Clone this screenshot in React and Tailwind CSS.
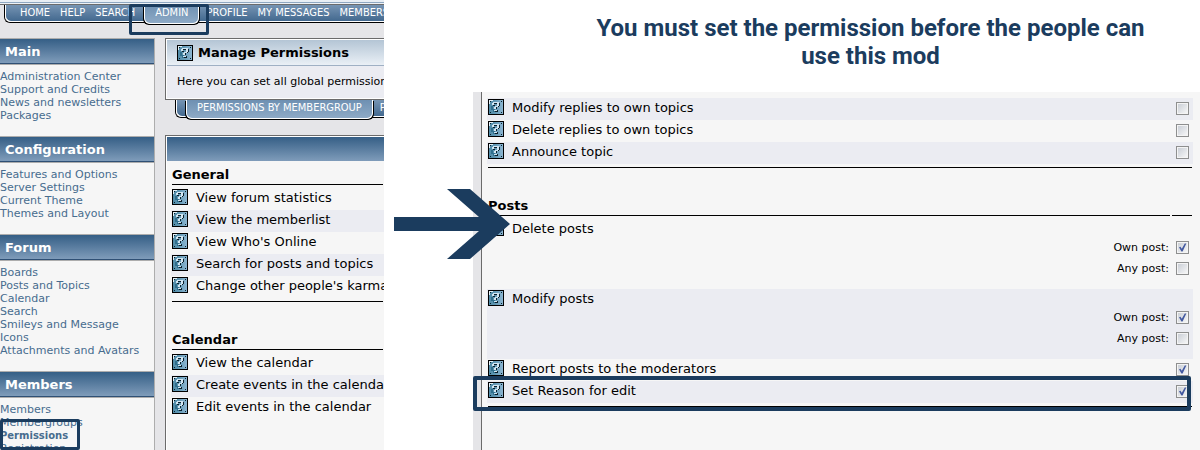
import React, { useState } from 'react';

const sidebarSections = [
  {
    title: 'Main',
    links: ['Administration Center', 'Support and Credits', 'News and newsletters', 'Packages']
  },
  {
    title: 'Configuration',
    links: ['Features and Options', 'Server Settings', 'Current Theme', 'Themes and Layout']
  },
  {
    title: 'Forum',
    links: ['Boards', 'Posts and Topics', 'Calendar', 'Search', 'Smileys and Message Icons', 'Attachments and Avatars']
  },
  {
    title: 'Members',
    links: ['Members', 'Membergroups', 'Permissions', 'Registration']
  }
];

const generalPermissions = [
  'View forum statistics',
  'View the memberlist',
  "View Who's Online",
  'Search for posts and topics',
  "Change other people's karma"
];

const calendarPermissions = [
  'View the calendar',
  'Create events in the calendar',
  'Edit events in the calendar'
];

const HelpIcon = () => (
  <svg className="w-4 h-4 shrink-0" viewBox="0 0 16 16" shapeRendering="crispEdges" aria-hidden="true">
    <defs>
      <linearGradient id="helpFill" x1="0" y1="0" x2="1" y2="0">
        <stop offset="0" stopColor="#4f8aa6" />
        <stop offset="0.4" stopColor="#5f97b3" />
        <stop offset="1" stopColor="#8db6d2" />
      </linearGradient>
    </defs>
    <rect width="16" height="16" fill="#000" />
    <rect x="1" y="1" width="14" height="14" fill="url(#helpFill)" />
    <path d="M1 1h4v1H3v1H2v2H1z" fill="#e4f1f8" />
    <path d="M2 2h1v1H2zM13 2h1v1h-1zM2 13h1v1H2zM13 13h1v1h-1z" fill="#06222f" />
    <path d="M3 7h2v3h2v3H5v-2H3z" fill="#2f6e8c" />
    <path d="M11 4h1v3h-1v1H9v2H8V8h2V7h1zM5 6h2v1H5zM6 4h3v1H6zM9 11h1v2H7v-1h2z" fill="#0a1f2b" />
    <path d="M5 3h6v1H5zM4 4h2v2H4zM9 4h2v3H9zM7 7h3v1H7zM6 8h2v2H6zM6 11h3v1H6z" fill="#d3e6f2" />
  </svg>
);

/* Nav tab strip with the classic rounded black/white outline */
const TabStrip = ({ items, active, className }) => (
  <nav className={`w-max border-l border-b border-black rounded-bl-md font-['DejaVu_Sans_Condensed','DejaVu_Sans',sans-serif] text-[11px] text-white ${className}`}>
    <div className="flex h-[17px] border-l border-b border-white rounded-bl-md bg-linear-to-b from-[#7694b3] to-[#43698f]">
      {items.map((item) => (
        <a
          key={item}
          href="#"
          className={
            item === active
              ? 'relative h-[19px] ml-1 mr-0.5 px-[10px] leading-4 border-x border-b border-white rounded-b-md bg-linear-to-b from-[#6e90b2] to-[#8eaac6] shadow-[1px_1px_0_#000,-1px_1px_0_#000]'
              : 'px-[5px] leading-4'
          }
        >
          {item}
        </a>
      ))}
    </div>
  </nav>
);

const Highlight = ({ className }) => (
  <span className={`absolute z-10 rounded-xs border-[#1b3c5e] pointer-events-none ${className}`} />
);

const Sidebar = () => (
  <aside className="w-[155px] shrink-0 border-r border-[#adadad] bg-[#f6f6f6] whitespace-normal">
    {sidebarSections.map(({ title, links }) => (
      <section key={title}>
        <h3 className="h-[27px] border-t border-b border-[#adadad]">
          <span className="block h-full pl-[5px] border-b border-[#2f5075] bg-linear-to-b from-[#355f86] to-[#7f9cba] text-[13px] leading-[26px] font-bold text-white">
            {title}
          </span>
        </h3>
        <ul className="pt-[5px] pb-[14px] pr-2 text-[11px] leading-[13px] text-[#476c8e]">
          {links.map((link) => (
            <li key={link} className="relative">
              <a href="#" className={link === 'Permissions' ? 'text-[10px] font-bold' : ''}>{link}</a>
              {link === 'Permissions' && (
                <Highlight className="left-0 -top-[10px] w-20 h-[31px] border-[3px]" />
              )}
            </li>
          ))}
        </ul>
      </section>
    ))}
  </aside>
);

const SectionTitle = ({ children, split }) => (
  <div className="flex gap-0.5 mx-px mb-[3px]">
    <h4 className="flex-1 h-5 border-b border-black text-[13px] leading-[19px] font-bold">{children}</h4>
    {split && <span className="w-5 border-b border-black" />}
  </div>
);

const SectionEnd = () => <div className="mx-px mt-[3px] mb-7 border-b border-black" />;

const PermissionList = ({ title, items }) => (
  <section>
    <SectionTitle>{title}</SectionTitle>
    <ul>
      {items.map((item) => (
        <li key={item} className="flex gap-2 h-[22px] px-px pt-px text-[13px] leading-[18px] even:bg-[#ebecf2]">
          <HelpIcon />
          <span>{item}</span>
        </li>
      ))}
    </ul>
  </section>
);

const Checkbox = ({ id, defaultChecked = false }) => {
  const [checked, setChecked] = useState(defaultChecked);

  return (
    <span className="relative block w-[13px] h-[13px] shrink-0">
      <input
        id={id}
        type="checkbox"
        checked={checked}
        onChange={(e) => setChecked(e.target.checked)}
        className="block w-[13px] h-[13px] appearance-none border border-[#8e8f8f] bg-linear-to-br from-[#c6cbd3] to-[#fafafa] shadow-[inset_0_0_0_1px_#f4f4f4]"
      />
      {checked && (
        <svg className="absolute inset-0 pointer-events-none" viewBox="0 0 13 13" aria-hidden="true">
          <path d="M3 6.2l1.5-.5 1.3 2L8.8 2.4l1.5.1L6.6 10.4H5.4z" fill="#4258a0" />
        </svg>
      )}
    </span>
  );
};

const CheckRow = ({ id, label, shaded, checked, highlighted }) => (
  <div className={`relative flex gap-2 h-[22px] pl-px pr-1 pt-px text-[13px] leading-[18px] ${shaded ? 'bg-[#ebecf2]' : ''}`}>
    <HelpIcon />
    <label htmlFor={id} className="flex-1">{label}</label>
    <div className="pt-[3px]">
      <Checkbox id={id} defaultChecked={checked} />
    </div>
    {highlighted && <Highlight className="-left-[14px] right-0.5 -top-[5px] h-[35px] border-4" />}
  </div>
);

const OwnAnyRow = ({ id, label, shaded }) => (
  <div className={`h-[70px] pl-px pr-1 pt-px ${shaded ? 'bg-[#ebecf2]' : ''}`}>
    <div className="flex gap-2 text-[13px] leading-[18px]">
      <HelpIcon />
      <span>{label}</span>
    </div>
    <div className="flex flex-col gap-2 pt-[3px] text-[11px] leading-[13px]">
      <div className="flex justify-end gap-[7px]">
        <label htmlFor={`${id}-own`}>Own post:</label>
        <Checkbox id={`${id}-own`} defaultChecked />
      </div>
      <div className="flex justify-end gap-[7px]">
        <label htmlFor={`${id}-any`}>Any post:</label>
        <Checkbox id={`${id}-any`} />
      </div>
    </div>
  </div>
);

const AdminPanel = () => (
  <div className="flex flex-col w-[32%] shrink-0 overflow-hidden whitespace-nowrap bg-[#e5e5e8]">
    <header className="relative h-[38px] shrink-0">
      <div className="h-1 border-t-2 border-b border-t-[#e8eef4] border-b-[#edf2f7] bg-[#8fa8c2]" />
      <div className="border-t border-[#6b6b6b]">
        <TabStrip
          items={['HOME', 'HELP', 'SEARCH', 'ADMIN', 'PROFILE', 'MY MESSAGES', 'MEMBERS']}
          active="ADMIN"
          className="ml-1 [&>div]:pl-[9px]"
        />
      </div>
      <Highlight className="left-[129px] top-1 w-20 h-[31px] border-[3px]" />
    </header>

    <div className="flex flex-1 gap-[10px] min-h-0">
      <Sidebar />
      <main className="flex flex-1 flex-col min-w-0">
        <section className="shrink-0 border border-r-0 border-[#6b6b6b] bg-white p-px pr-0">
          <h2 className="flex items-center gap-[5px] h-[26px] pl-[10px] border-b border-[#9fb0c4] bg-linear-to-b from-[#b4c5d5] to-[#eaf0f6] text-[13px] font-bold">
            <HelpIcon />
            Manage Permissions
          </h2>
          <p className="h-8 pl-[10px] bg-[#ebecf2] text-[11px] leading-8">
            Here you can set all global permissions
          </p>
        </section>
        <TabStrip
          items={['PERMISSIONS BY MEMBERGROUP', 'PERMISSIONS BY BOARD']}
          active="PERMISSIONS BY MEMBERGROUP"
          className="shrink-0 ml-[10px] mb-[17px] [&>div]:pl-[5px]"
        />
        <section className="flex-1 border-l border-t border-[#6b6b6b] bg-[#f6f6f6]">
          <div className="h-full border-l border-t border-white">
            <div className="h-6 mb-1 bg-linear-to-b from-[#355f86] to-[#7f9cba]" />
            <div className="pl-1">
              <PermissionList title="General" items={generalPermissions} />
              <SectionEnd />
              <PermissionList title="Calendar" items={calendarPermissions} />
            </div>
          </div>
        </section>
      </main>
    </div>
  </div>
);

const PostPermissions = () => (
  <div className="flex-1 pl-2 bg-[#e5e5e8]">
    <form className="h-full pt-[6px] pl-[5px] pr-[7px] border-l border-[#6b6b6b] bg-[#f6f6f6]">
      <CheckRow id="modify-replies" label="Modify replies to own topics" shaded />
      <CheckRow id="delete-replies" label="Delete replies to own topics" />
      <CheckRow id="announce" label="Announce topic" shaded />
      <SectionEnd />
      <SectionTitle split>Posts</SectionTitle>
      <OwnAnyRow id="delete-posts" label="Delete posts" />
      <OwnAnyRow id="modify-posts" label="Modify posts" shaded />
      <CheckRow id="report" label="Report posts to the moderators" checked />
      <CheckRow id="set-reason" label="Set Reason for edit" shaded checked highlighted />
      <SectionEnd />
    </form>
  </div>
);

const App = () => (
  <div className="flex h-screen overflow-hidden bg-white text-black font-['DejaVu_Sans',sans-serif]">
    <AdminPanel />
    <div className="relative flex flex-1 flex-col min-w-0">
      <h1 className="h-[92px] shrink-0 pt-[14px] pl-[157px] text-center text-[24px] leading-7 font-bold text-[#1b3c5e] font-['Roboto','Liberation_Sans',sans-serif]">
        You must set the permission before the people can
        <br />
        use this mod
      </h1>
      <div className="flex flex-1 pl-[89px]">
        <PostPermissions />
      </div>
      <svg className="absolute left-[10px] top-[189px] w-[116px] h-[70px]" viewBox="0 0 116 70" aria-hidden="true">
        <path d="M53 0h23l40 35-40 35H53l32-28H0V28h85z" fill="#1b3c5e" />
      </svg>
    </div>
  </div>
);

export default App;
